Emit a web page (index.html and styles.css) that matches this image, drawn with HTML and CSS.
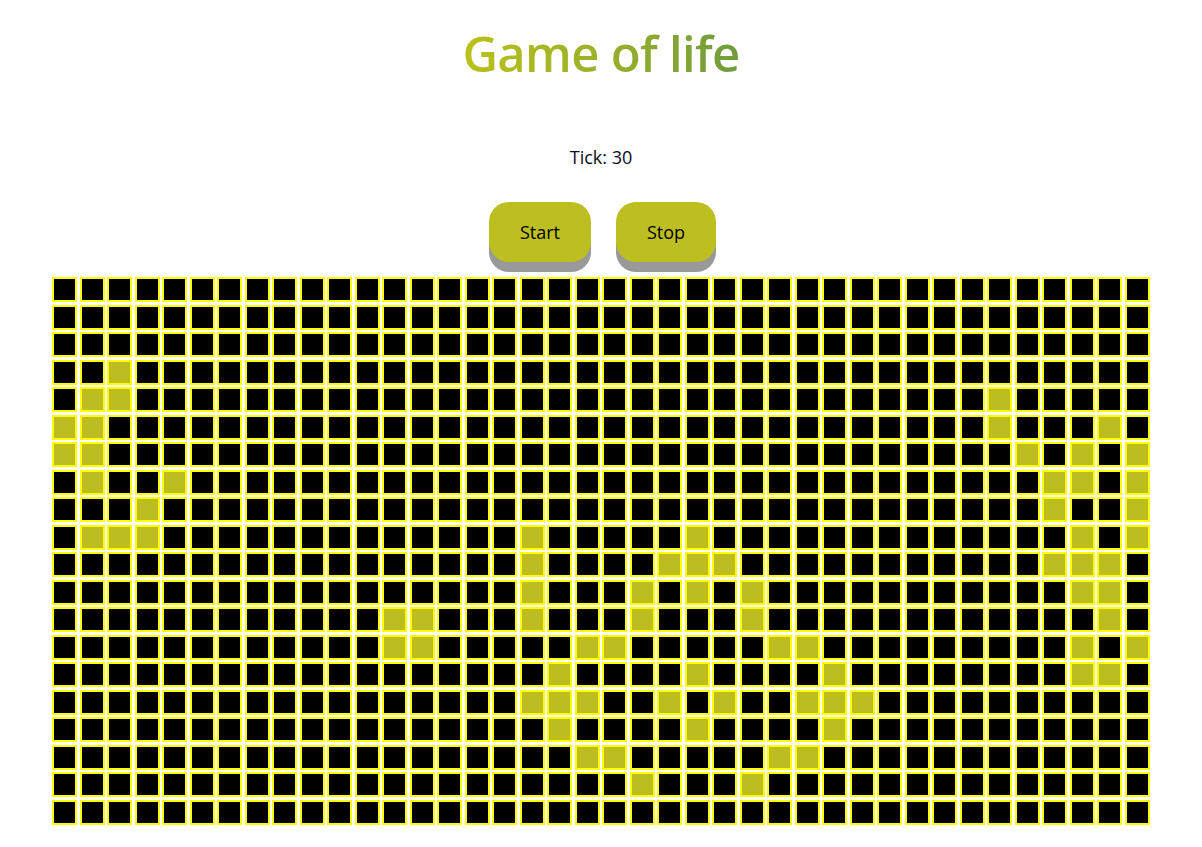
FILE: index.html
```html
<!DOCTYPE html>
<html lang="en">
<head>
<meta charset="utf-8">
<title>Game of life</title>
<link rel="stylesheet" href="styles.css">
</head>
<body>
<main class="app">
  <h1 class="title">Game of life</h1>
  <p class="tick">Tick: 30</p>
  <div class="controls">
    <button class="btn" type="button">Start</button>
    <button class="btn" type="button">Stop</button>
  </div>
  <div class="board" id="board"></div>
</main>
<script src="script.js"></script>
</body>
</html>
```

FILE: styles.css
```css
html, body {
  margin: 0;
  padding: 0;
  background: #ffffff;
}

.app {
  display: flex;
  flex-direction: column;
  align-items: center;
  font-family: "Open Sans", "Noto Sans", sans-serif;
}

.title {
  margin: 23px 0 0;
  font-size: 49px;
  line-height: 60px;
  letter-spacing: -0.7px;
  font-weight: 600;
  background: linear-gradient(90deg, #bac11a 0%, #9bb02a 50%, #6f9c3c 100%);
  -webkit-background-clip: text;
  background-clip: text;
  color: transparent;
}

.tick {
  margin: 62px 0 0;
  font-size: 18px;
  line-height: 24px;
  color: #0b0b22;
}

.controls {
  display: flex;
  gap: 25px;
  margin-top: 33px;
  padding-left: 3px;
}

.btn {
  height: 60px;
  padding: 0 31px;
  border: none;
  border-radius: 20px;
  background: #bdbe20;
  box-shadow: 0 10px 0 #999999;
  font-family: "Open Sans", "Noto Sans", sans-serif;
  font-size: 18px;
  color: #000000;
  cursor: pointer;
}

.board {
  display: grid;
  grid-template-columns: repeat(40, 25px);
  grid-auto-rows: 25px;
  gap: 2.5px;
  margin-top: 15px;
}

.cell {
  box-sizing: border-box;
  width: 25px;
  height: 25px;
  border: 2px solid #ffff00;
  background: #000000;
}

.cell.alive {
  background: #bdbd1f;
}
```

FILE: script.js
```js
(function () {
  var COLS = 40, ROWS = 20;
  var alive = {
    3: [2],
    4: [1, 2, 34],
    5: [0, 1, 34, 38],
    6: [0, 1, 35, 37, 39],
    7: [1, 4, 36, 37, 39],
    8: [3, 36, 39],
    9: [1, 2, 3, 17, 23, 37, 39],
    10: [17, 22, 23, 24, 36, 37, 38],
    11: [17, 21, 23, 25, 37, 38],
    12: [12, 13, 17, 21, 25, 38],
    13: [12, 13, 19, 20, 26, 27, 37, 39],
    14: [18, 23, 28, 37, 38],
    15: [17, 18, 19, 22, 24, 27, 28, 29],
    16: [18, 23, 28],
    17: [19, 20, 26, 27],
    18: [21, 25]
  };
  var board = document.getElementById('board');
  var frag = document.createDocumentFragment();
  for (var r = 0; r < ROWS; r++) {
    var row = alive[r] || [];
    for (var c = 0; c < COLS; c++) {
      var d = document.createElement('div');
      d.className = row.indexOf(c) >= 0 ? 'cell alive' : 'cell';
      frag.appendChild(d);
    }
  }
  board.appendChild(frag);
})();
```
